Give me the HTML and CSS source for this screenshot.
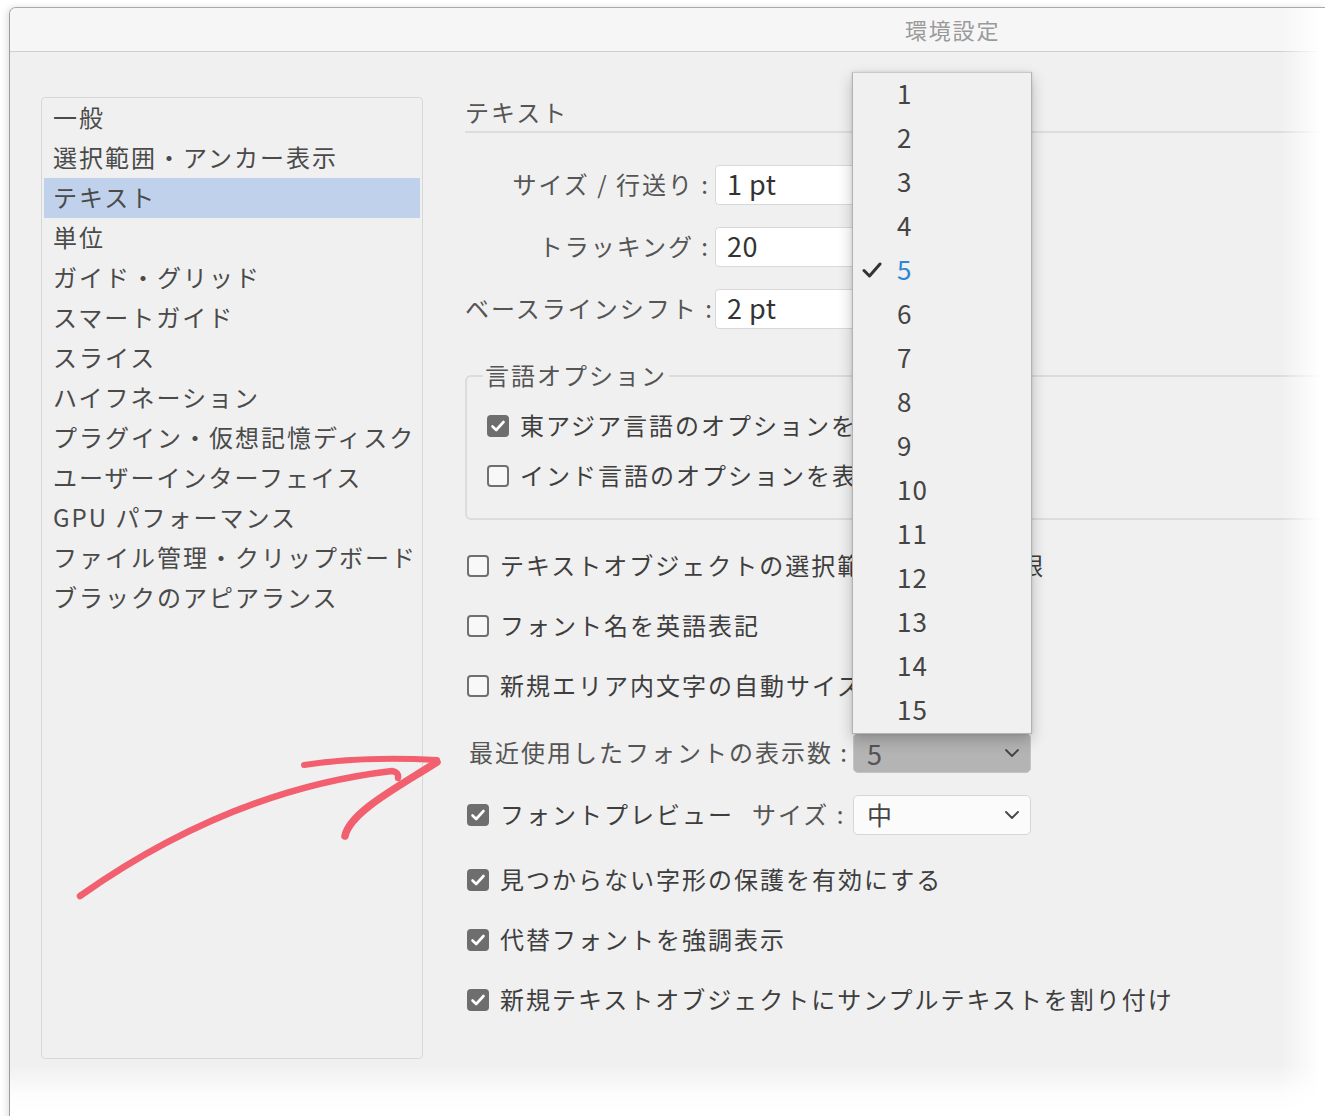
FILE: index.html
```html
<!DOCTYPE html>
<html lang="ja">
<head>
<meta charset="utf-8">
<title>環境設定</title>
<link rel="stylesheet" href="styles.css">
</head>
<body>
<div class="window">
  <div class="titlebar"><span class="title">環境設定</span></div>
  <div class="content">
    <ul class="sidebar">
      <li>一般</li>
      <li>選択範囲・アンカー表示</li>
      <li class="selected">テキスト</li>
      <li>単位</li>
      <li>ガイド・グリッド</li>
      <li>スマートガイド</li>
      <li>スライス</li>
      <li>ハイフネーション</li>
      <li>プラグイン・仮想記憶ディスク</li>
      <li>ユーザーインターフェイス</li>
      <li>GPU パフォーマンス</li>
      <li>ファイル管理・クリップボード</li>
      <li>ブラックのアピアランス</li>
    </ul>
    <div class="main">
      <h2 class="heading">テキスト</h2>
      <div class="fields">
        <div class="field"><span class="flabel">サイズ / 行送り :</span><span class="input">1 pt</span></div>
        <div class="field"><span class="flabel">トラッキング :</span><span class="input">20</span></div>
        <div class="field"><span class="flabel">ベースラインシフト :</span><span class="input">2 pt</span></div>
      </div>
      <fieldset class="group">
        <legend>言語オプション</legend>
        <div class="check first"><span class="box on"><svg viewBox="0 0 22 22" width="22" height="22"><path d="M5.5 11.5 L9.2 15 L16.5 7" fill="none" stroke="#fff" stroke-width="2.6" stroke-linecap="round" stroke-linejoin="round"/></svg></span><span class="txt">東アジア言語のオプションを表示</span></div>
        <div class="check"><span class="box"></span><span class="txt">インド言語のオプションを表示</span></div>
      </fieldset>
      <div class="check out c1"><span class="box"></span><span class="txt">テキストオブジェクトの選択範囲をパスに制限</span></div>
      <div class="check out"><span class="box"></span><span class="txt">フォント名を英語表記</span></div>
      <div class="check out"><span class="box"></span><span class="txt">新規エリア内文字の自動サイズ調整</span></div>
      <div class="row recent">
        <span class="rlabel">最近使用したフォントの表示数 :</span>
        <span class="select pressed"><span>5</span><svg class="chev" viewBox="0 0 14 8" width="14" height="8"><path d="M1 1 L7 7 L13 1" fill="none" stroke="#444" stroke-width="1.8" stroke-linecap="round" stroke-linejoin="round"/></svg></span>
      </div>
      <div class="row preview">
        <span class="box on"><svg viewBox="0 0 22 22" width="22" height="22"><path d="M5.5 11.5 L9.2 15 L16.5 7" fill="none" stroke="#fff" stroke-width="2.6" stroke-linecap="round" stroke-linejoin="round"/></svg></span>
        <span class="ptext">フォントプレビュー</span>
        <span class="slabel">サイズ :</span>
        <span class="select"><span class="sv">中</span><svg class="chev" viewBox="0 0 14 8" width="14" height="8"><path d="M1 1 L7 7 L13 1" fill="none" stroke="#444" stroke-width="1.8" stroke-linecap="round" stroke-linejoin="round"/></svg></span>
      </div>
      <div class="check out c2"><span class="box on"><svg viewBox="0 0 22 22" width="22" height="22"><path d="M5.5 11.5 L9.2 15 L16.5 7" fill="none" stroke="#fff" stroke-width="2.6" stroke-linecap="round" stroke-linejoin="round"/></svg></span><span class="txt">見つからない字形の保護を有効にする</span></div>
      <div class="check out"><span class="box on"><svg viewBox="0 0 22 22" width="22" height="22"><path d="M5.5 11.5 L9.2 15 L16.5 7" fill="none" stroke="#fff" stroke-width="2.6" stroke-linecap="round" stroke-linejoin="round"/></svg></span><span class="txt">代替フォントを強調表示</span></div>
      <div class="check out"><span class="box on"><svg viewBox="0 0 22 22" width="22" height="22"><path d="M5.5 11.5 L9.2 15 L16.5 7" fill="none" stroke="#fff" stroke-width="2.6" stroke-linecap="round" stroke-linejoin="round"/></svg></span><span class="txt">新規テキストオブジェクトにサンプルテキストを割り付け</span></div>
    </div>
  </div>
  <div class="fade-right"></div>
  <div class="fade-bottom"></div>
</div>

<ul class="popup">
  <li>1</li>
  <li>2</li>
  <li>3</li>
  <li>4</li>
  <li class="current"><svg class="tick" viewBox="0 0 20 18" width="20" height="18"><path d="M2 9.5 L7.5 15 L18 3" fill="none" stroke="#333" stroke-width="3" stroke-linecap="round" stroke-linejoin="round"/></svg>5</li>
  <li>6</li>
  <li>7</li>
  <li>8</li>
  <li>9</li>
  <li>10</li>
  <li>11</li>
  <li>12</li>
  <li>13</li>
  <li>14</li>
  <li>15</li>
</ul>

<svg class="arrow" viewBox="0 0 1325 1116" width="1325" height="1116">
  <g fill="none" stroke="#f2606f" stroke-linecap="round" stroke-linejoin="round">
    <path d="M80 896 Q 230 790 392 771 Q 399 772 398 778" stroke-width="6.5"/>
    <path d="M304 765 Q 362 756 437 760" stroke-width="6"/>
    <path d="M437 762 C 398 787 350 812 345 836" stroke-width="7.5"/>
  </g>
</svg>
</body>
</html>
```

FILE: styles.css
```css
html, body {
  margin: 0;
  padding: 0;
}
body {
  width: 1325px;
  height: 1116px;
  overflow: hidden;
  position: relative;
  background: #ffffff;
  padding: 7px 0 0 9px;
  box-sizing: border-box;
  font-family: "Noto Sans CJK JP", "Noto Sans", sans-serif;
  color: #444;
}
.window {
  position: relative;
  height: 1120px;
  background: #f0f0f0;
  border-top: 1px solid #a9a9a9;
  border-left: 1px solid #9d9d9d;
  border-top-left-radius: 7px;
  box-shadow: -2px 0 6px rgba(0,0,0,0.12);
  overflow: hidden;
}
.titlebar {
  height: 44px;
  box-sizing: border-box;
  padding-bottom: 2px;
  background: #f6f6f6;
  border-bottom: 1px solid #cfcfcf;
  display: flex;
  align-items: center;
  padding-left: 895px;
}
.title {
  font-size: 22px;
  letter-spacing: 1.8px;
  color: #9a9a9a;
}
.content {
  display: flex;
  padding: 45px 0 0 31px;
}
.sidebar {
  list-style: none;
  margin: 0;
  width: 382px;
  height: 962px;
  box-sizing: border-box;
  border: 1px solid #d7d7d7;
  border-radius: 4px;
  padding: 0 2px;
  flex: none;
}
.sidebar li {
  height: 40px;
  box-sizing: border-box;
  line-height: 37px;
  padding: 0 0 3px 9px;
  font-size: 24px;
  letter-spacing: 2px;
  color: #4a4a4a;
  white-space: nowrap;
}
.sidebar li.selected {
  background: #bfd1eb;
}
.main {
  margin-left: 42px;
  flex: 1;
  font-size: 24px;
  letter-spacing: 2px;
}
.heading {
  margin: 0;
  height: 36px;
  box-sizing: border-box;
  line-height: 30px;
  padding-bottom: 4px;
  font-size: 24px;
  font-weight: normal;
  color: #555;
  border-bottom: 2px solid #dddddd;
}
.fields {
  margin-top: 32px;
  display: flex;
  flex-direction: column;
  gap: 22px;
}
.field {
  display: flex;
  align-items: center;
  height: 40px;
}
.flabel {
  width: 245px;
  text-align: right;
  color: #555;
  white-space: nowrap;
  padding-bottom: 3px;
}
.input {
  margin-left: 5px;
  width: 200px;
  height: 40px;
  box-sizing: border-box;
  background: #fff;
  border: 1px solid #d8d8d8;
  border-radius: 4px;
  padding-left: 11px;
  font-size: 27px;
  letter-spacing: 0.5px;
  line-height: 36px;
  color: #333;
}
.group {
  margin: 30px 0 0 0;
  padding: 0 0 22px 20px;
  border: 2px solid #dcdcdc;
  border-radius: 6px;
}
.group legend {
  padding: 0 2px 3px;
  margin-left: -4px;
  line-height: 31px;
  color: #555;
}
.check {
  display: flex;
  align-items: center;
  height: 40px;
  gap: 11px;
  white-space: nowrap;
  color: #3e3e3e;
}
.txt {
  padding-bottom: 3px;
}
.check.first {
  margin-top: 13px;
}
.group .check + .check {
  margin-top: 10px;
}
.check.out {
  margin-left: 2px;
  margin-top: 20px;
}
.check.out.c1 {
  margin-top: 26px;
}
.check.out.c2 {
  margin-top: 25px;
}
.box {
  width: 22px;
  height: 22px;
  box-sizing: border-box;
  border: 2px solid #707070;
  border-radius: 4px;
  background: #f8f8f8;
  flex: none;
  display: block;
}
.box.on {
  border: none;
  background: #6e6e6e;
}
.box svg {
  display: block;
}
.row {
  display: flex;
  align-items: center;
  height: 40px;
  white-space: nowrap;
}
.recent {
  margin-top: 27px;
  margin-left: 4px;
}
.rlabel {
  color: #555;
  width: 384px;
  padding-bottom: 3px;
  flex: none;
}
.preview {
  margin-top: 22px;
  margin-left: 2px;
}
.ptext {
  margin-left: 11px;
  color: #3e3e3e;
  padding-bottom: 3px;
  flex: none;
}
.slabel {
  margin-left: 18px;
  color: #555;
  width: 101px;
  padding-bottom: 3px;
  flex: none;
}
.select {
  flex: none;
  width: 178px;
  height: 40px;
  box-sizing: border-box;
  background: #fbfbfb;
  border: 1px solid #d6d6d6;
  border-radius: 5px;
  display: flex;
  align-items: center;
  justify-content: space-between;
  padding: 0 11px 0 13px;
  font-size: 25px;
  color: #444;
}
.sv {
  padding-bottom: 3px;
}
.select.pressed {
  background: #b4b4b4;
  border-color: #c4c4c4;
  color: #555;
  font-size: 27px;
}
.chev {
  display: block;
}
.fade-right {
  position: absolute;
  top: 0;
  right: 0;
  width: 45px;
  height: 100%;
  background: linear-gradient(to right, rgba(255,255,255,0), #ffffff 90%);
}
.fade-bottom {
  position: absolute;
  left: 0;
  right: 0;
  top: 1060px;
  height: 60px;
  background: linear-gradient(to bottom, rgba(255,255,255,0.1), rgba(255,255,255,0.85) 45%, #ffffff 75%);
}
.popup {
  position: absolute;
  left: 852px;
  top: 72px;
  width: 180px;
  margin: 0;
  padding: 0;
  list-style: none;
  box-sizing: border-box;
  background: #f0f0f0;
  border: 1px solid #b3b3b3;
  border-top-color: #c8c8c8;
  box-shadow: 0 6px 14px rgba(0,0,0,0.22), 0 0 3px rgba(0,0,0,0.12);
}
.popup li {
  position: relative;
  height: 44px;
  box-sizing: border-box;
  line-height: 40px;
  padding: 0 0 4px 44px;
  font-size: 26px;
  color: #444;
  letter-spacing: 1px;
}
.popup li.current {
  color: #2f86d4;
}
.tick {
  position: absolute;
  left: 9px;
  top: 12px;
}
.arrow {
  position: absolute;
  left: 0;
  top: 0;
  pointer-events: none;
}
```
